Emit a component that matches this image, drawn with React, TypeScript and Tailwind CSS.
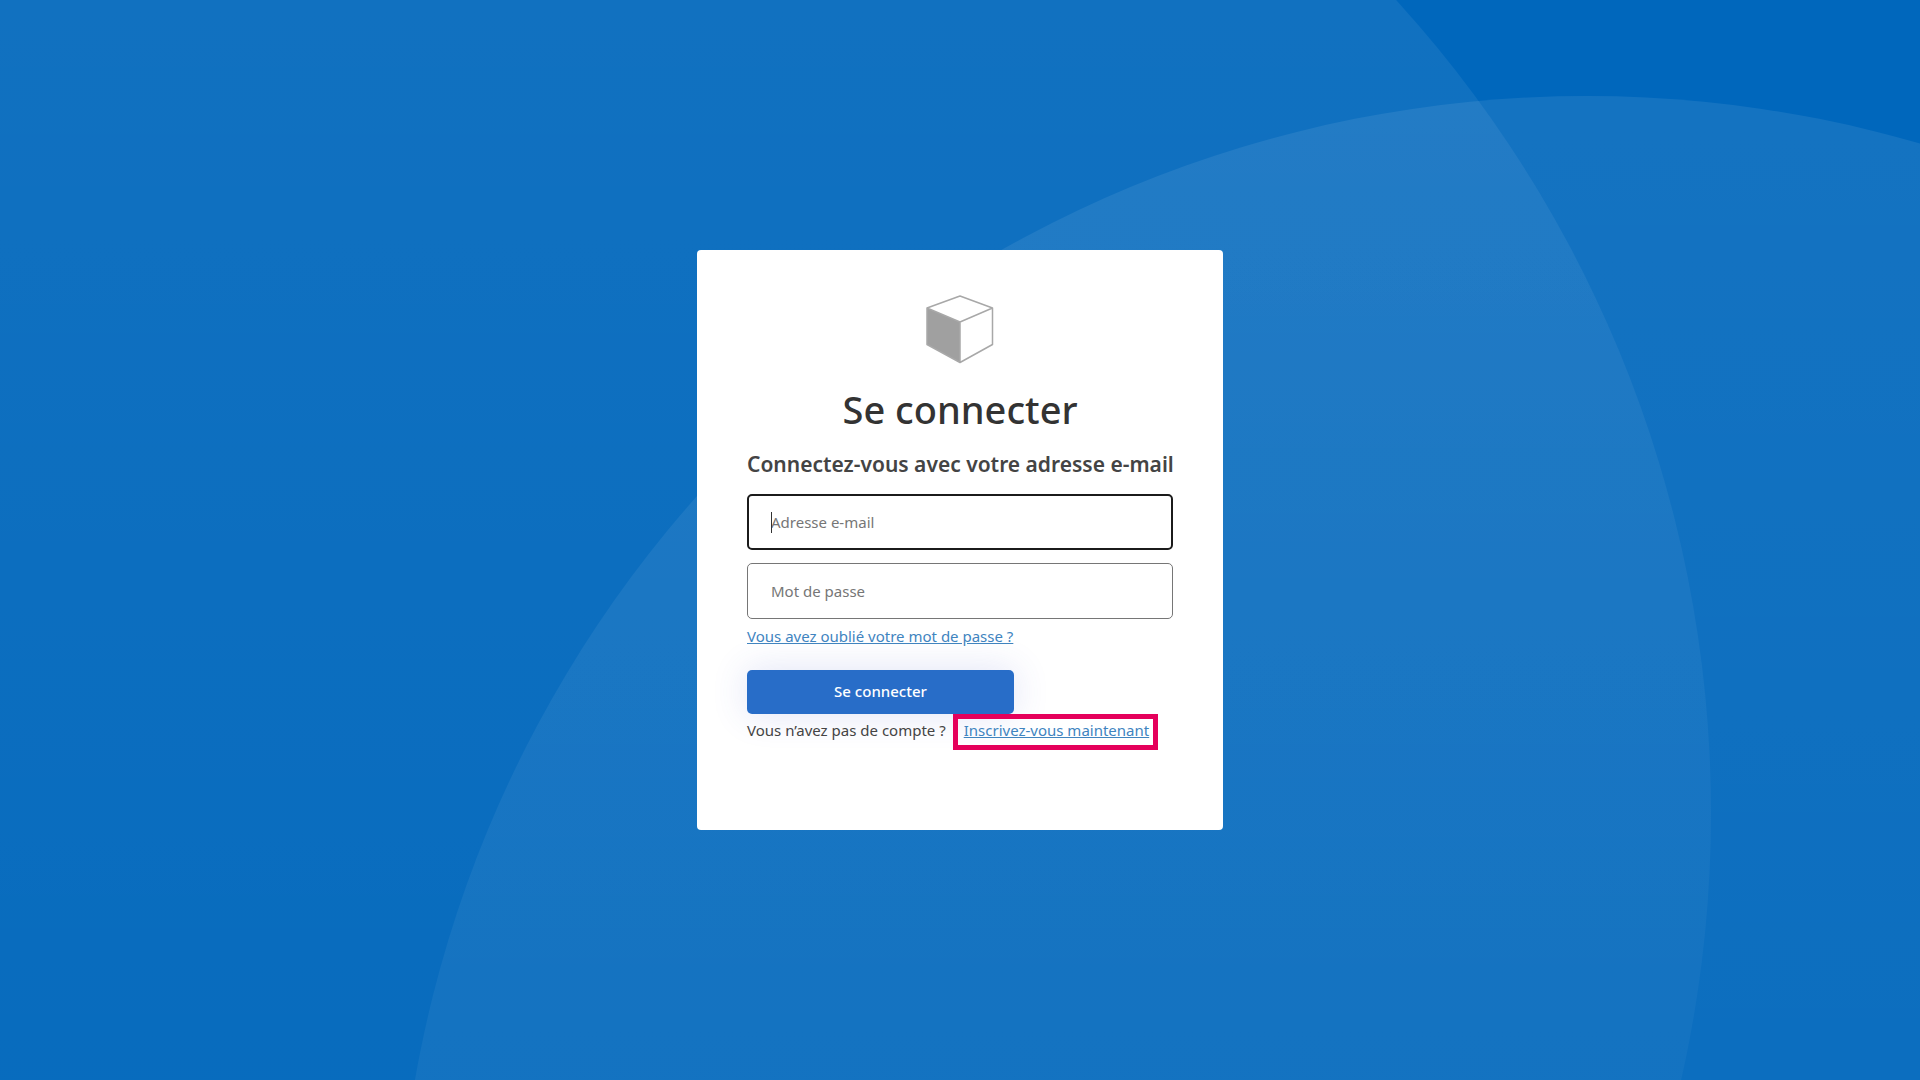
function Backdrop() {
  return (
    <svg
      className="pointer-events-none absolute inset-0 h-full w-full"
      viewBox="0 0 1920 1080"
      preserveAspectRatio="xMidYMid slice"
      aria-hidden="true"
    >
      <defs>
        <linearGradient id="fade" x1="0" y1="0" x2="0" y2="1">
          <stop offset="0" stopColor="#fff" stopOpacity="0.08" />
          <stop offset="1" stopColor="#fff" stopOpacity="0" />
        </linearGradient>
      </defs>
      <circle cx="504" cy="813" r="1207" fill="url(#fade)" />
      <circle cx="1587" cy="1286" r="1190" fill="url(#fade)" />
    </svg>
  );
}

function CubeLogo() {
  return (
    <svg className="h-[70px] w-[70px]" viewBox="0 0 70 70" fill="none" aria-hidden="true">
      <path d="M2 14 35 28V68.500L2 50.500Z" fill="#a0a0a0" />
      <path
        d="M2 14 35 2 67.500 14V50.500L35 68.500 2 50.500ZM2 14 35 28 67.500 14M35 28V68.500"
        stroke="#a8a8a8"
        strokeWidth="1.500"
        strokeLinejoin="round"
      />
    </svg>
  );
}

const linkClass = "text-[#4084bf] underline";

export default function App() {
  return (
    <div className="relative flex min-h-screen items-center justify-center overflow-hidden bg-[#0067bc] font-['Noto_Sans','Open_Sans',sans-serif] text-[15px] leading-5 text-[#444444]">
      <Backdrop />
      <main className="relative w-full max-w-[526px] rounded-[4px] bg-white px-[50px] pt-11 pb-[90px]">
        <div className="flex justify-center">
          <CubeLogo />
        </div>
        <h1 className="mt-5 text-center text-[38px] leading-[50px] font-medium text-[#333333]">Se connecter</h1>
        <form onSubmit={(e) => e.preventDefault()}>
          <h2 className="mt-4 text-center text-[21px] leading-7 font-semibold whitespace-nowrap">
            Connectez-vous avec votre adresse e-mail
          </h2>
          <div className="relative mt-4">
            <input
              type="email"
              aria-label="Adresse e-mail"
              placeholder="Adresse e-mail"
              autoFocus
              className="peer block h-14 w-full rounded-[5px] border-2 border-[#1b1b1b] bg-white px-[22px] outline-none placeholder:text-[#767676]"
            />
            <span className="pointer-events-none absolute top-[18px] left-6 hidden h-[21px] w-px bg-[#333333] peer-placeholder-shown:block" />
          </div>
          <input
            type="password"
            aria-label="Mot de passe"
            placeholder="Mot de passe"
            className="mt-[13px] block h-14 w-full rounded-[5px] border border-[#767676] bg-white px-[23px] outline-none placeholder:text-[#767676]"
          />
          <div className="mt-[7px]">
            <a href="#" className={linkClass}>Vous avez oublié votre mot de passe ?</a>
          </div>
          <button
            type="submit"
            className="mt-6 block h-11 w-[267px] rounded-[5px] bg-[#286dc8] pb-0.5 font-medium text-white shadow-[0_0_36px_rgba(60,80,200,0.16)]"
          >
            Se connecter
          </button>
        </form>
        <p className="mt-[6px] flex gap-[18px] whitespace-nowrap">
          <span>Vous n’avez pas de compte ?</span>
          <a href="#" className={`relative ${linkClass}`}>
            Inscrivez-vous maintenant
            <span className="absolute -top-[6px] -right-[9px] -bottom-[10px] -left-[11px] border-[5px] border-[#e5005b]" />
          </a>
        </p>
      </main>
    </div>
  );
}
